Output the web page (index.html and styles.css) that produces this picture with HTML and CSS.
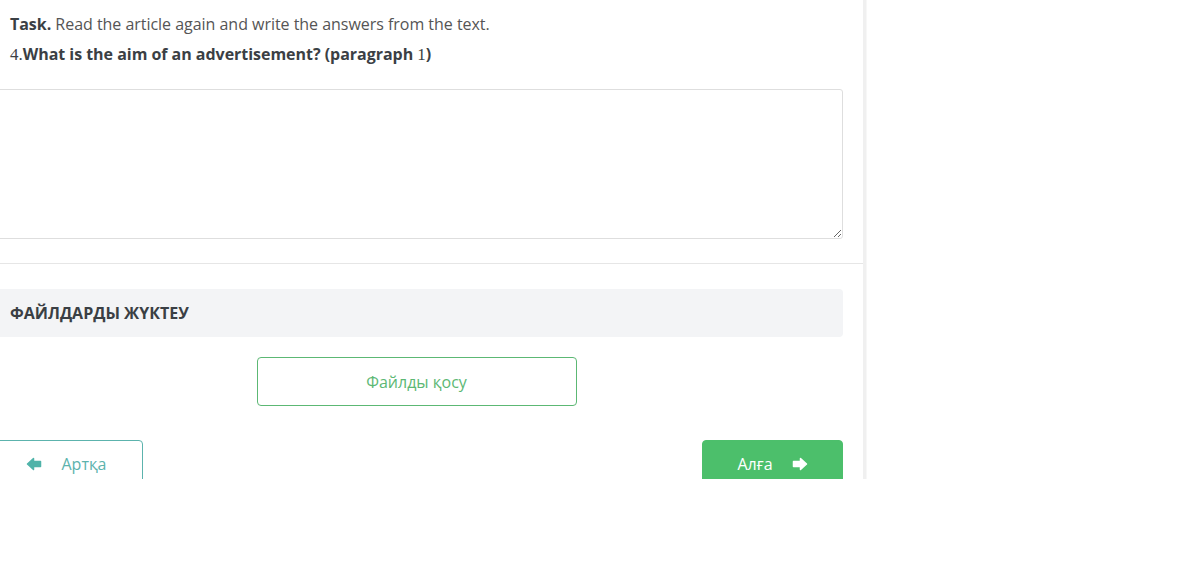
FILE: index.html
```html
<!DOCTYPE html>
<html>
  <head>
    <meta charset="UTF-8">
    <title>Task</title>
    <link rel="stylesheet" href="styles.css">
  </head>
  <body>
    <div class="frame">
      <div class="card">
        <div class="question">
          <p class="task"><b>Task.</b> Read the article again and write the answers from the text.</p>
          <p class="ask"><span class="num">4.</span><b>What is the aim of an advertisement? (paragraph <span class="num">1</span>)</b></p>
        </div>
        <textarea class="answer"></textarea>
      </div>
      <hr class="divider">
      <div class="card">
        <div class="section-title">ФАЙЛДАРДЫ ЖҮКТЕУ</div>
        <div class="upload-row">
          <button class="upload-btn">Файлды қосу</button>
        </div>
        <div class="nav-row">
          <button class="nav-btn back">
            <svg width="16" height="14" viewBox="0 0 16 14"><path d="M7.5 1.5 L1.5 7 L7.5 12.5 L7.5 9.5 L14.5 9.5 L14.5 4.5 L7.5 4.5 Z" fill="#4fb3a9" stroke="#4fb3a9" stroke-width="1.5" stroke-linejoin="round"/></svg>
            Артқа
          </button>
          <button class="nav-btn next">
            Алға
            <svg width="16" height="14" viewBox="0 0 16 14"><path d="M8.5 1.5 L14.5 7 L8.5 12.5 L8.5 9.5 L1.5 9.5 L1.5 4.5 L8.5 4.5 Z" fill="#fff" stroke="#fff" stroke-width="1.5" stroke-linejoin="round"/></svg>
          </button>
        </div>
      </div>
    </div>
  </body>
</html>
```

FILE: styles.css
```css
body {
  margin: 0;
  font-family: "Open Sans", sans-serif;
  background: #fff;
  color: #555;
}
.frame {
  width: 863px;
  height: 479px;
  overflow: hidden;
  border-right: 3px solid #f0f0f0;
  box-shadow: 1px 0 0 #f7f7f7;
}
.card {
  margin-left: -10px;
  padding-right: 20px;
}
.question {
  padding: 12px 0 0 20px;
}
.question p {
  margin: 0;
  font-size: 16px;
  line-height: 24px;
  letter-spacing: -0.03px;
}
.task {
  margin-bottom: 6px !important;
}
.task b,
.ask b {
  color: #3b3f44;
}
.ask {
  color: #3b3f44;
}
.num {
  font-family: "Liberation Serif", serif;
  font-weight: normal;
  font-size: 17px;
}
.answer {
  display: block;
  box-sizing: border-box;
  width: 100%;
  height: 150px;
  margin-top: 22px;
  border: 1px solid #dedede;
  border-radius: 3px;
  font-family: inherit;
}
.divider {
  border: none;
  border-top: 1px solid #e6e6e6;
  margin: 24px 0 25px;
}
.section-title {
  background: #f3f4f6;
  border-radius: 4px;
  height: 48px;
  padding-left: 20px;
  display: flex;
  align-items: center;
  font-size: 16px;
  font-weight: bold;
  color: #3a3f44;
}
.upload-row {
  display: flex;
  justify-content: center;
  margin-top: 20px;
}
.upload-btn {
  width: 320px;
  height: 49px;
  background: #fff;
  border: 1px solid #5cb874;
  border-radius: 4px;
  color: #5cb874;
  font-family: inherit;
  font-size: 16px;
}
.nav-row {
  display: flex;
  justify-content: space-between;
  margin-top: 34px;
}
.nav-btn {
  height: 48px;
  border-radius: 4px;
  font-family: inherit;
  font-size: 16px;
  display: flex;
  align-items: center;
  justify-content: center;
  gap: 19px;
}
.back {
  width: 153px;
  background: #fff;
  border: 1px solid #5cb3ad;
  color: #5cb3ad;
}
.next {
  width: 141px;
  background: #4cbf6b;
  border: 1px solid #4cbf6b;
  color: #fff;
}
```
